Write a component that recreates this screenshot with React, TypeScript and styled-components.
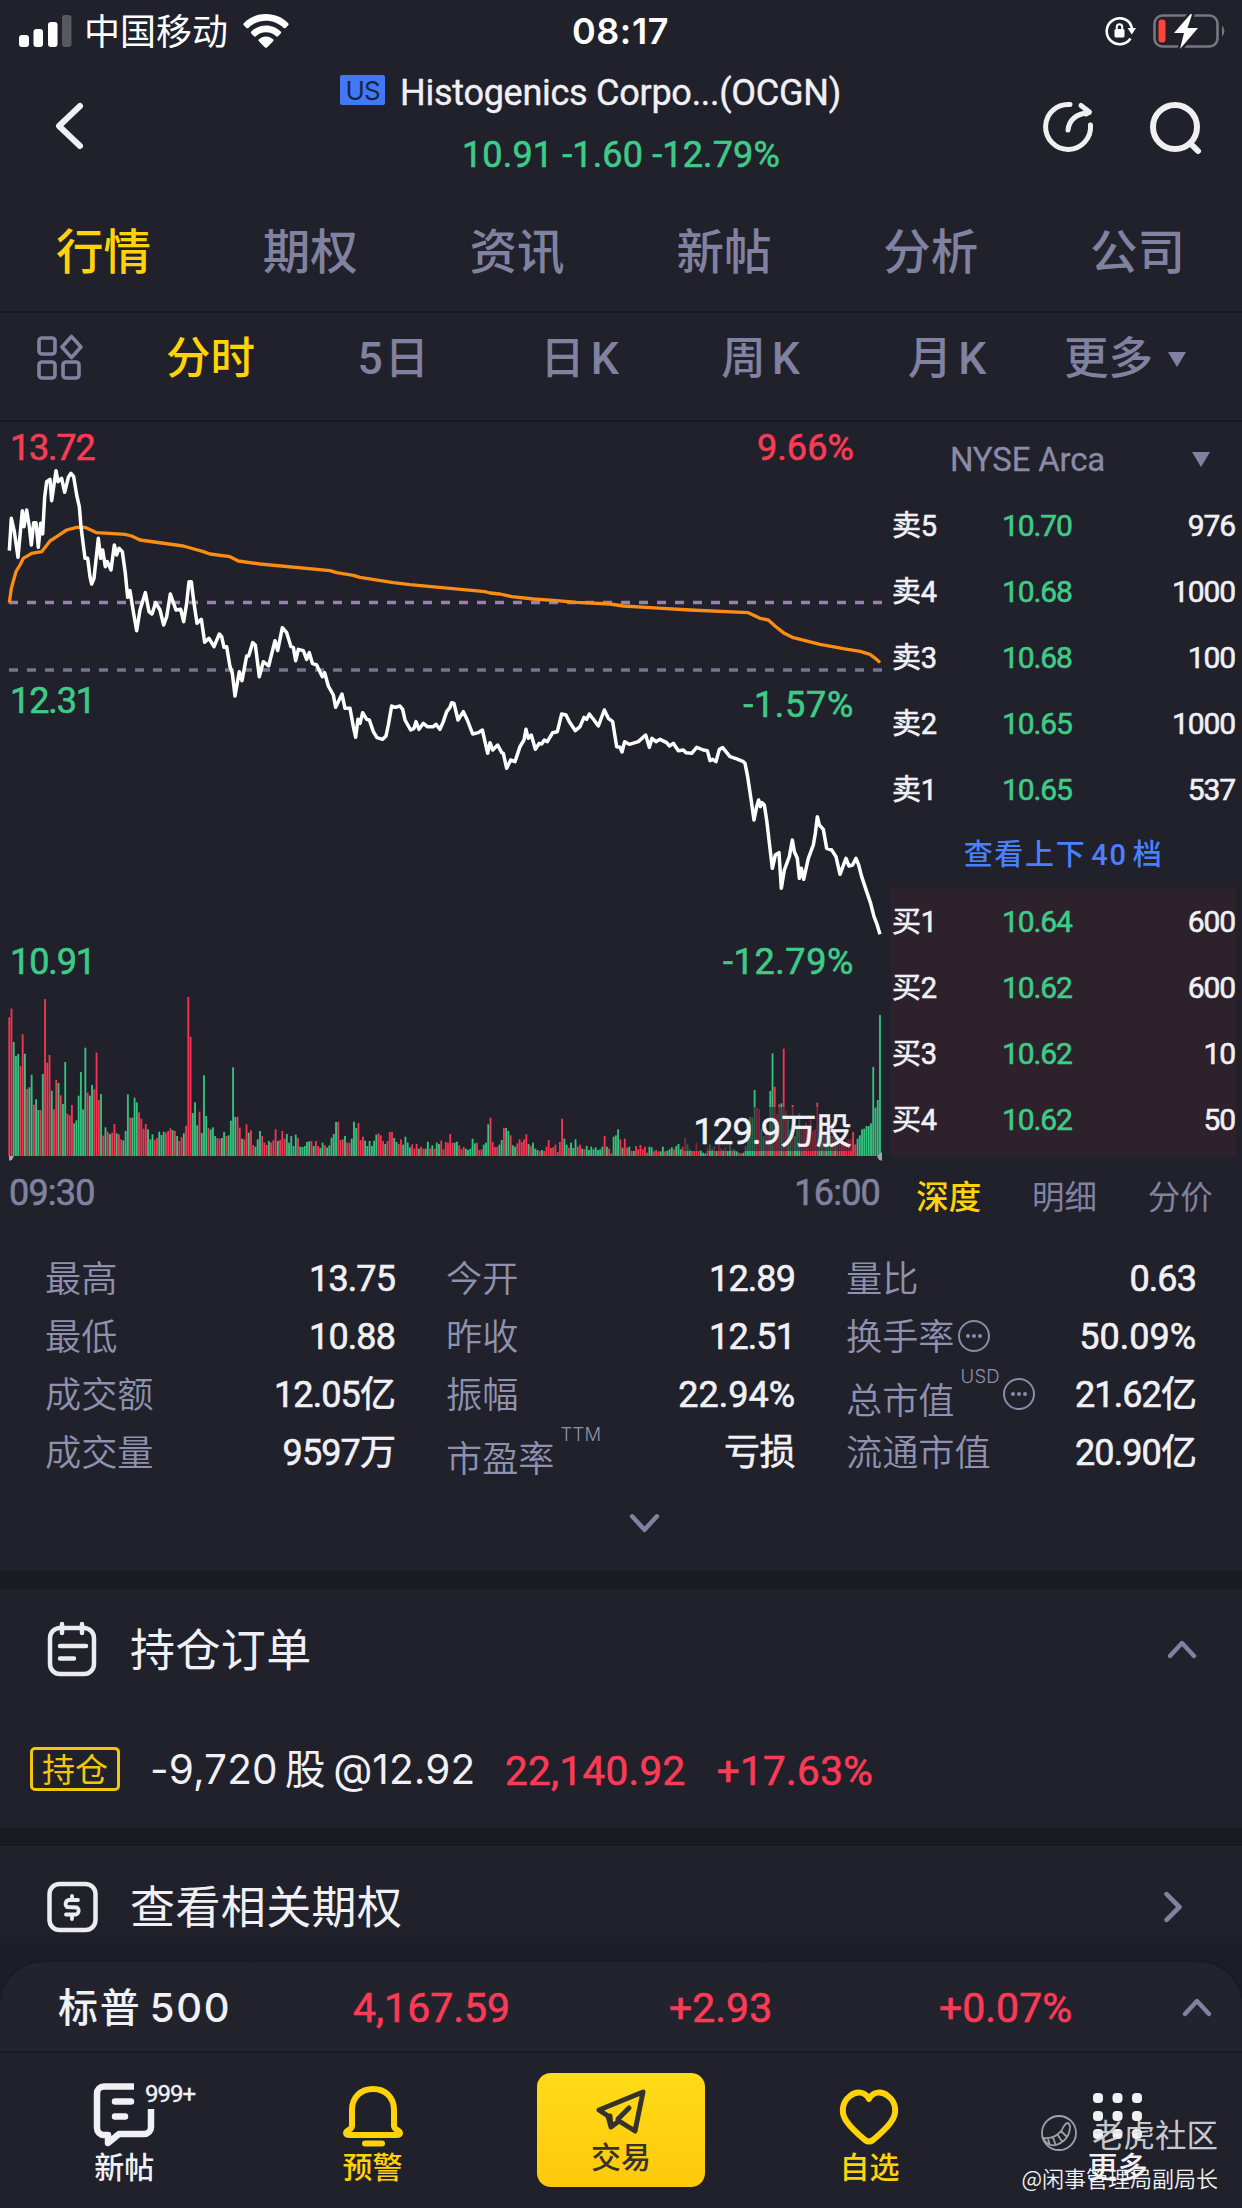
import React from 'react';
import styled, { createGlobalStyle, css } from 'styled-components';

const C = {
  bg: '#20212b',
  dark: '#1a1a23',
  white: '#f0f0f5',
  muted: '#8082a0',
  label: '#8a8ba8',
  yellow: '#ffd20a',
  green: '#3ecb87',
  red: '#fb3b56',
  blue: '#4a80ff',
};

const CJK = "'Noto Sans CJK SC', sans-serif";
const NUM = `Roboto, ${CJK}`;

/* figures sit between regular and medium weight */
const figure = css`
  font-weight: 400;
  -webkit-text-stroke: 0.6px currentColor;
`;

const GlobalStyle = createGlobalStyle`
  * { box-sizing: border-box; }
  body { margin: 0; background: ${C.bg}; }
`;

const Screen = styled.main`
  width: 1242px;
  height: 2208px;
  overflow: hidden;
  display: flex;
  flex-direction: column;
  background: ${C.bg};
  color: ${C.white};
  font-family: ${NUM};
  font-weight: 400;
  position: relative;
`;

/* ---------- status bar ---------- */

const StatusBar = styled.div`
  height: 60px;
  display: grid;
  grid-template-columns: 1fr auto 1fr;
  align-items: center;
  padding: 2px 15px 0 19px;
`;

const StatusSide = styled.div<{ $end?: boolean }>`
  display: flex;
  align-items: center;
  justify-content: ${(p) => (p.$end ? 'flex-end' : 'flex-start')};
  gap: 15px;
`;

const Carrier = styled.span`
  font: 400 36px/54px ${CJK};
  color: #fff;
  margin: -4px 0 0 -3px;
`;

const Clock = styled.span`
  font: 600 36px/54px Inter, sans-serif;
  letter-spacing: 0.6px;
  margin-left: -5px;
  color: #fff;
`;

/* ---------- header ---------- */

const Header = styled.header`
  height: 133px;
  display: grid;
  grid-template-columns: 240px 1fr 240px;
  border-bottom: 2px solid #1e1f28;
`;

const BackArea = styled.div`
  padding: 41px 0 0 53px;
`;

const HeaderActions = styled.div`
  display: flex;
  gap: 55px;
  padding: 41px 0 0 40px;
`;

const TitleBlock = styled.div`
  display: flex;
  flex-direction: column;
  align-items: center;
  padding-top: 1px;
`;

const TitleLine = styled.div`
  display: flex;
  align-items: center;
  height: 62px;
  margin-left: -61px;
  gap: 15px;
  white-space: nowrap;
  font-size: 36px;
  letter-spacing: -0.27px;
`;

const TitleText = styled.span`
  -webkit-text-stroke: 0.4px currentColor;
  padding-top: 1px;
`;

const MarketBadge = styled.span`
  width: 45px;
  height: 30px;
  border-radius: 2px;
  background: #4378f5;
  color: #1b2340;
  font: 400 26px/31px Inter, sans-serif;
  letter-spacing: -1px;
  text-align: center;
  margin-top: -4px;
`;

const PriceLine = styled.div`
  ${figure}
  font-size: 36px;
  line-height: 64px;
  color: ${C.green};
  letter-spacing: 0.15px;
`;

/* ---------- tabs ---------- */

const Tabs = styled.nav`
  height: 120px;
  display: grid;
  grid-template-columns: repeat(6, 1fr);
  border-bottom: 2px solid #181820;
  padding-right: 1px;
`;

const Tab = styled.span<{ $on?: boolean }>`
  font: 500 47.5px/112px ${CJK};
  text-align: center;
  color: ${(p) => (p.$on ? C.yellow : C.muted)};
`;

const SubTabs = styled.nav`
  height: 109px;
  display: grid;
  grid-template-columns: 119px 183px 184px 187px 175px 198px 158px;
  align-items: center;
  border-bottom: 2px solid #181820;
`;

const SubTab = styled.span<{ $on?: boolean; $ls?: number }>`
  display: flex;
  justify-content: center;
  align-items: center;
  gap: 15px;
  font: 500 44.5px/84px Roboto, ${CJK};
  letter-spacing: ${(p) => p.$ls ?? 0}px;
  word-spacing: -5px;
  margin-top: -15px;
  color: ${(p) => (p.$on ? C.yellow : C.muted)};
`;

const LayoutIcon = styled.svg`
  width: 50px;
  height: 50px;
  margin: -18px 0 0 34px;
`;

const Triangle = styled.i<{ $w: number; $h: number }>`
  width: 0;
  height: 0;
  border-left: ${(p) => p.$w / 2}px solid transparent;
  border-right: ${(p) => p.$w / 2}px solid transparent;
  border-top: ${(p) => p.$h}px solid ${C.muted};
`;

/* ---------- chart and order book ---------- */

const Market = styled.section`
  height: 800px;
  display: grid;
  grid-template-columns: 891px 345px;
`;

const ChartPanel = styled.div`
  position: relative;
`;

const ChartSvg = styled.svg`
  display: block;
  width: 885px;
  height: 740px;
`;

const AxisLabel = styled.span<{ $top: number; $side: 'left' | 'right'; $tone: string; $ls?: number }>`
  ${figure}
  position: absolute;
  top: ${(p) => p.$top - 22}px;
  ${(p) => (p.$side === 'left' ? 'left: 10px;' : 'right: 37px;')}
  font-size: 36px;
  line-height: 44px;
  color: ${(p) => p.$tone};
  letter-spacing: ${(p) => p.$ls ?? 0}px;
`;

const VolumeLabel = styled.span`
  ${figure}
  position: absolute;
  right: 39px;
  top: 685px;
  height: 44px;
  padding: 0 1px 0 10px;
  background: rgba(32, 33, 43, 0.6);
  font-size: 36px;
  line-height: 50px;
  letter-spacing: -0.7px;
`;

const TimeAxis = styled.div`
  ${figure}
  display: flex;
  justify-content: space-between;
  padding: 9px 11px 0 9px;
  font-size: 36px;
  line-height: 44px;
  letter-spacing: -0.8px;
  color: ${C.muted};
`;

const Book = styled.div`
  display: flex;
  flex-direction: column;
`;

const Exchange = styled.div`
  height: 70px;
  display: flex;
  align-items: center;
  justify-content: flex-end;
  padding: 5px 26px 0 0;
  gap: 87px;
  font-size: 33px;
  letter-spacing: -0.2px;
  color: ${C.label};
  -webkit-text-stroke: 0.3px currentColor;
`;

const BookSide = styled.div<{ $tint?: boolean }>`
  background: ${(p) => (p.$tint ? '#2d212b' : 'transparent')};
  padding-bottom: ${(p) => (p.$tint ? 5 : 0)}px;
`;

const BookRow = styled.div`
  ${figure}
  height: 66px;
  display: grid;
  grid-template-columns: 110px 1fr 1fr;
  align-items: center;
  padding: 2px 1px 0 1px;
  font-size: 30px;
  line-height: 40px;
  letter-spacing: -1.1px;
`;

const BookName = styled.span`
  font-size: 29px;
  letter-spacing: -0.2px;
`;

const BookPrice = styled.span`
  color: ${C.green};
`;

const BookSize = styled.span`
  text-align: right;
`;

const DepthLink = styled.div`
  height: 66px;
  font: 500 29px/66px Roboto, ${CJK};
  letter-spacing: 1.7px;
  word-spacing: -4px;
  color: ${C.blue};
  text-align: center;
`;

const BookTabs = styled.div`
  display: grid;
  grid-template-columns: repeat(3, 1fr);
  height: 66px;
  margin-right: -2px;
`;

const BookTab = styled.span<{ $on?: boolean }>`
  font: ${(p) => (p.$on ? 500 : 400)} 32.5px/76px ${CJK};
  text-align: center;
  color: ${(p) => (p.$on ? C.yellow : C.muted)};
`;

/* ---------- statistics ---------- */

const Stats = styled.section`
  height: 349px;
  padding: 26px 46px 0 45px;
  display: flex;
  flex-direction: column;
`;

const StatGrid = styled.div`
  display: grid;
  grid-template-columns: 350px 349px 350px;
  grid-auto-rows: 58px;
  column-gap: 51px;
`;

const Stat = styled.div`
  display: flex;
  justify-content: space-between;
  align-items: center;
`;

const StatName = styled.span`
  display: flex;
  align-items: center;
  height: 54px;
  font: 350 36.2px/54px ${CJK};
  color: #8f91ae;
  margin-top: -2px;
`;

const Lowered = styled.span`
  padding-top: 11px;
`;

const Unit = styled.sup`
  font: 300 18.5px/20px Inter, sans-serif;
  align-self: flex-start;
  letter-spacing: 0.2px;
  margin: 1px 0 0 6px;
`;

const StatValue = styled.span<{ $ls?: number }>`
  ${figure}
  font-size: 36px;
  line-height: 44px;
  letter-spacing: ${(p) => p.$ls ?? -0.9}px;
  margin-top: 3px;
`;

const ExpandRow = styled.div`
  display: flex;
  justify-content: center;
  margin: 27px 0 0 47px;
`;

/* ---------- sections ---------- */

const Band = styled.div`
  height: 18px;
  background: ${C.dark};
`;

const Positions = styled.section`
  height: 239px;
`;

const SectionRow = styled.div<{ $pr: number }>`
  height: 122px;
  display: flex;
  align-items: center;
  padding: 0 ${(p) => p.$pr}px 0 44px;
`;

const SectionTitle = styled.h2`
  flex: 1;
  margin: -5px 0 0 30px;
  font: 400 45px/66px ${CJK};
  letter-spacing: 0.4px;
`;

const Holding = styled.div`
  height: 90px;
  margin-top: 13px;
  display: flex;
  align-items: center;
  padding-left: 30px;
  white-space: nowrap;
`;

const HoldingTag = styled.span`
  width: 90px;
  height: 44px;
  border: 3px solid #f0c70a;
  border-radius: 5px;
  color: #f0c70a;
  font: 400 33px/37px ${CJK};
  text-align: center;
`;

const HoldingText = styled.span`
  width: 324px;
  margin-left: 30px;
  padding-top: 2px;
  font: 400 40.5px/60px Inter, ${CJK};
  letter-spacing: 0.1px;
  word-spacing: -4px;
`;

const Gain = styled.span<{ $ml: number }>`
  ${figure}
  margin-left: ${(p) => p.$ml}px;
  font-size: 40.5px;
  line-height: 60px;
  padding-top: 4px;
  letter-spacing: 0.3px;
  color: ${C.red};
`;

const Options = styled.section`
  height: 116px;
  background: linear-gradient(${C.bg} 62%, #1c1d26);
`;

/* ---------- bottom ---------- */

const Bottom = styled.footer`
  background: #1c1d26;
`;

const IndexBar = styled.div`
  height: 91px;
  display: grid;
  grid-template-columns: 341px 316px 270px 1fr 28px;
  align-items: center;
  padding: 2px 32px 0 12px;
  border-radius: 44px 44px 0 0;
  border-bottom: 2px solid #1a1a22;
  background: #22232d;
  box-shadow: 0 -1px 2px #181820;
`;

const IndexName = styled.span`
  font: 500 40px/60px Inter, ${CJK};
  padding-left: 46px;
  letter-spacing: 1.7px;
  word-spacing: -4px;
`;

const IndexValue = styled.span`
  ${figure}
  font-size: 41px;
  padding-top: 1px;
  color: ${C.red};
`;

const NavBar = styled.nav`
  height: 155px;
  display: grid;
  grid-template-columns: repeat(5, 1fr);
  background: ${C.bg};
`;

const NavItem = styled.div<{ $tone?: string }>`
  position: relative;
  display: flex;
  flex-direction: column;
  align-items: center;
  padding-top: 28px;
  color: ${(p) => p.$tone ?? C.white};
`;

const NavIcon = styled.svg`
  width: 66px;
  height: 66px;
`;

const NavLabel = styled.span`
  font: 500 30px/40px ${CJK};
  margin-top: -2px;
`;

const Count = styled.span`
  position: absolute;
  left: 145px;
  top: 29px;
  font-size: 24px;
  line-height: 24px;
  letter-spacing: -1px;
  -webkit-text-stroke: 0.4px currentColor;
`;

const TradeButton = styled.div`
  width: 168px;
  height: 114px;
  margin-top: -8px;
  padding-top: 10px;
  border-radius: 14px;
  background: linear-gradient(#ffdb18, #ffc90a);
  color: #33322d;
  display: flex;
  flex-direction: column;
  align-items: center;

  ${NavLabel} {
    margin-top: -4px;
  }
`;

const Watermark = styled.div`
  position: absolute;
  right: 24px;
  bottom: 15px;
  display: flex;
  flex-direction: column;
  align-items: flex-end;
  white-space: nowrap;
`;

const WatermarkBrand = styled.div`
  display: flex;
  align-items: center;
  gap: 14px;
  font: 400 31.5px/40px ${CJK};
  color: rgba(225, 225, 228, 0.88);
`;

const WatermarkUser = styled.div`
  font: 350 22px/32px ${CJK};
  color: #f2f2f2;
  margin-top: 8px;
`;

/* ---------- data ---------- */

const PRICE =
  '28,422 34,325 43,365 54,442 67,302 72,350 80,300 88,350 94,405 101,338 108,338 115,412 122,340 128,372 134,262 140,215 150,208 155,272 168,182 174,215 185,205 194,247 205,202 213,190 221,200 230,255 238,290 243,350 255,445 263,445 270,500 275,522 282,505 295,385 302,445 308,420 316,470 322,455 333,480 343,405 350,435 357,415 367,425 376,490 383,562 390,542 400,605 410,662 420,600 436,548 447,605 456,612 467,578 480,600 491,645 500,620 511,552 528,600 542,598 551,635 560,580 567,515 574,515 582,580 591,640 604,628 614,697 627,685 642,710 658,672 665,680 672,712 680,710 690,770 697,790 705,858 718,785 726,812 740,738 746,738 758,698 766,705 778,800 790,755 806,768 825,692 833,722 847,653 860,668 873,710 880,712 887,752 895,718 910,722 920,748 928,728 937,760 950,765 967,800 974,788 985,828 1000,855 1007,892 1026,852 1035,895 1050,895 1060,950 1067,982 1074,928 1080,940 1088,908 1100,928 1108,930 1120,965 1131,983 1148,988 1158,978 1165,945 1175,888 1185,892 1200,888 1208,898 1215,930 1232,960 1242,955 1248,935 1257,958 1270,940 1282,950 1300,950 1308,943 1320,958 1330,935 1340,905 1350,892 ' +
  '1355,878 1362,880 1374,930 1390,905 1402,930 1418,972 1435,968 1447,960 1463,1030 1470,998 1478,1020 1493,1005 1505,1028 1510,1030 1520,1075 1532,1050 1545,1055 1560,1010 1572,990 1578,958 1585,985 1594,975 1606,1018 1618,1000 1625,1002 1633,990 1642,995 1658,968 1672,965 1685,912 1698,915 1708,935 1726,962 1740,950 1752,922 1760,928 1768,912 1782,930 1795,948 1813,900 1825,925 1838,935 1850,1010 1860,1012 1866,1026 1874,995 1888,1003 1915,995 1937,975 1948,1012 1956,985 1968,995 1980,988 2000,998 2008,1008 2020,1000 2035,1022 2050,1020 2058,1028 2075,1030 2090,1012 2110,1020 2122,1022 2130,1052 2138,1048 2148,1055 2158,1018 2168,1013 2190,1040 2208,1046 2230,1055 2235,1060 2243,1100 2252,1160 2262,1230 2270,1190 2276,1170 2281,1190 2286,1178 2293,1185 2300,1230 2317,1375 2326,1335 2337,1328 2344,1435 2353,1380 2368,1340 2377,1290 2383,1325 2392,1345 2398,1405 2404,1375 2411,1408 2425,1345 2440,1305 2446,1270 2452,1220 2458,1245 2470,1258 2480,1315 2495,1320 2508,1340 2520,1393 2538,1345 2547,1368 2558,1365 2568,1345 2576,1365 2585,1400 2600,1445 2612,1480 2622,1520 2630,1540 2640,1573';

const AVERAGE =
  '28,578 34,535 48,485 60,465 70,445 95,430 125,425 150,393 170,380 200,360 230,352 255,352 290,368 375,373 395,378 420,390 550,408 610,425 630,432 690,440 715,453 780,462 990,482 1010,488 1060,496 1080,502 1180,518 1230,524 1350,535 1455,545 1470,549 1500,552 1535,560 1600,567 1670,572 1730,577 1830,582 1870,588 1950,593 2070,600 2245,608 2280,625 2305,630 2325,648 2353,670 2380,683 2460,703 2530,716 2580,724 2610,733 2630,748 2640,758';

const VOLUME = (
  'r416 r442 g342 g300 g306 r270 r365 g307 r201 g206 g244 r154 g170 g138 r138 g246 r471 r280 r303 g196 r140 r228 g219 r182 g156 g282 r127 r122 r153 g98 g107 g181 g252 g140 g325 r190 g181 g213 r200 r310 r168 g186 r61 g86 r72 g66 r70 r96 g68 r65 r50 g47 g75 g185 r115 g115 g175 g161 r131 r112 r82 r96 g80 g50 g65 r48 r54 g73 g63 g73 r70 r75 r83 g78 r75 g60 r45 r57 g68 r91 r477 r358 g129 g161 g92 r133 g69 g242 g120 r84 g80 g86 g60 r54 r52 g54 g72 r60 g62 g106 g266 g117 r118 r85 g52 r50 r95 g70 r77 r33 g28 g50 g75 r60 r40 r33 g45 r40 r47 r80 g45 r48 r75 r52 g66 g40 g60 g30 g64 r54 g28 g27 g30 g42 g44 r45 g30 r45 r30 g24 g40 r32 g25 g32 g55 g66 g102 r103 r48 r50 g60 r40 r40 g52 g103 g84 r99 r48 r58 g46 g30 g45 g30 g46 g64 r68 r62 r45 g36 r45 r72 r72 g54 g42 r36 r50 g34 g58 g40 g26 r35 r22 r36 g22 r28 r22 g22 g43 r22 g32 r22 g40 g36 r46 r20 r42 r40 r66 ' +
  'r40 g40 g43 r32 r20 r27 g22 g18 g22 g52 g38 r40 r18 r20 g34 g40 g95 r115 r42 r27 r27 g34 g48 r85 g84 g75 r62 g32 g28 r38 r50 r42 r50 r65 g36 r30 g40 g22 g18 r15 g18 r15 r28 r48 r24 r26 r34 r12 r42 r112 g52 g34 r25 g40 g24 g50 r28 r34 g22 r20 g30 g18 g28 g20 g26 g18 g20 g28 r60 g28 r22 r8 g58 g62 g80 r50 g25 r52 r25 g28 r15 g15 r30 r20 r33 r20 r28 r10 g28 g26 r14 r18 r14 g14 g28 r14 g16 g20 g26 r20 g30 g36 g20 r28 r55 g35 g20 r15 r15 r40 r15 g18 g10 g8 r25 g35 g22 r30 g15 r35 r22 g18 r25 g15 g35 r20 g20 g14 r10 r8 g10 g30 g75 g118 g115 g198 r145 r140 g80 g60 r75 r70 g195 g308 r208 r125 r155 g158 r322 r135 g110 g80 r153 g60 g85 g128 r90 r80 r100 r90 r110 r75 r80 r160 g95 g60 r70 g65 g55 g60 r60 g55 r60 r50 r40 r35 r45 r50 r50 r72 r35 g52 g62 g80 g82 g90 g90 g98 g267 g145 g168 g423'
).split(' ');

const SELL = [
  ['卖5', '10.70', '976'],
  ['卖4', '10.68', '1000'],
  ['卖3', '10.68', '100'],
  ['卖2', '10.65', '1000'],
  ['卖1', '10.65', '537'],
];

const BUY = [
  ['买1', '10.64', '600'],
  ['买2', '10.62', '600'],
  ['买3', '10.62', '10'],
  ['买4', '10.62', '50'],
];

type StatItem = { name: string; value: string; unit?: string; more?: boolean; ls?: number };

const STATS: StatItem[] = [
  { name: '最高', value: '13.75' },
  { name: '今开', value: '12.89' },
  { name: '量比', value: '0.63' },
  { name: '最低', value: '10.88' },
  { name: '昨收', value: '12.51' },
  { name: '换手率', value: '50.09%', more: true, ls: 0 },
  { name: '成交额', value: '12.05亿' },
  { name: '振幅', value: '22.94%', ls: 0 },
  { name: '总市值', value: '21.62亿', unit: 'USD', more: true },
  { name: '成交量', value: '9597万' },
  { name: '市盈率', value: '亏损', unit: 'TTM', ls: -0.5 },
  { name: '流通市值', value: '20.90亿' },
];

/* ---------- small drawings ---------- */

const Chevron = ({ dir, size = 28, color = C.muted }: { dir: 'up' | 'down' | 'right'; size?: number; color?: string }) => {
  const d = { up: 'M3 21 L15 8 L27 21', down: 'M3 9 L15 22 L27 9', right: 'M9 3 L21 15 L9 27' }[dir];
  return (
    <svg width={size} height={size} viewBox="0 0 30 30" fill="none" stroke={color} strokeWidth="4.400" strokeLinecap="round" strokeLinejoin="round">
      <path d={d} />
    </svg>
  );
};

const MoreIcon = styled.svg`
  width: 34px;
  height: 34px;
  margin: 4px 0 0 2px;
`;

const More = () => (
  <MoreIcon viewBox="0 0 34 34">
    <circle cx="17" cy="17" r="15" fill="none" stroke="#8a8ba8" strokeWidth="2" />
    <g fill="#8a8ba8">
      <circle cx="11" cy="17" r="2" />
      <circle cx="17" cy="17" r="2" />
      <circle cx="23" cy="17" r="2" />
    </g>
  </MoreIcon>
);

const Signal = () => (
  <svg width="53" height="34" viewBox="0 0 53 34" fill="#fff">
    <rect x="0" y="21" width="10" height="12" rx="3" />
    <rect x="14.5" y="15" width="9.5" height="18" rx="3" />
    <rect x="29" y="8" width="9.5" height="25" rx="3" />
    <rect x="43" y="1" width="9.5" height="32" rx="3" opacity=".25" />
  </svg>
);

const Wifi = () => (
  <svg width="46" height="34" viewBox="0 0 46 34" fill="#fff">
    <path d="M23 0C14 0 6 3.600 .8 9.200c-.6.6-.6 1.400 0 2l2.600 2.700c.6.6 1.400.6 2 0C10 9.400 16.200 6.700 23 6.700s13 2.700 17.600 7.200c.6.6 1.400.6 2 0l2.600-2.700c.6-.6.6-1.400 0-2C40 3.600 32 0 23 0z" />
    <path d="M23 11.400c-5.700 0-10.900 2.300-14.700 6-.6.6-.6 1.400 0 2l2.700 2.800c.6.6 1.300.6 1.900 0 2.600-2.500 6.200-4 10.100-4s7.500 1.500 10.100 4c.6.6 1.300.6 1.900 0l2.700-2.800c.6-.6.6-1.400 0-2-3.800-3.700-9-6-14.700-6z" />
    <path d="M23 22.500c-2.800 0-5.300 1.100-7.100 2.800-.6.6-.6 1.300 0 1.900l6.100 6.200c.6.6 1.400.6 2 0l6.100-6.200c.6-.6.6-1.300 0-1.900-1.800-1.700-4.300-2.800-7.100-2.800z" />
  </svg>
);

const RotationLock = () => (
  <svg width="34" height="32" viewBox="0 0 34 32" fill="none" stroke="#fff" strokeWidth="2.600">
    <path d="M26.500 9 A13 13 0 1 0 26.500 23.500" />
    <path d="M23.500 13 h8.500 l-4.200 6.500 z" fill="#fff" stroke="none" />
    <path d="M26 8.500 q2 3 2 6" />
    <rect x="10.500" y="14" width="10" height="8.500" rx="1.500" fill="#fff" stroke="none" />
    <path d="M12.800 14.500 v-2.500 a2.700 2.700 0 0 1 5.400 0 v2.500" strokeWidth="2" />
  </svg>
);

const Battery = () => (
  <svg width="74" height="38" viewBox="0 0 74 38">
    <rect x="1.500" y="3.500" width="63" height="31" rx="8" fill="none" stroke="#77777f" strokeWidth="2.600" />
    <path d="M69 13.500 q5 5.500 0 11 z" fill="#77777f" />
    <rect x="5.500" y="7.500" width="7" height="23" rx="3" fill="#ff453a" />
    <path d="M37.500 2 L21 21 h10 L27 37 L45 16 h-10.500 L39 2.500 z" fill="#fff" stroke={C.bg} strokeWidth="5" paintOrder="stroke" strokeLinejoin="round" />
  </svg>
);

const VolumeBars = () => (
  <g>
    {VOLUME.map((v, i) => {
      const h = Number(v.slice(1));
      return <rect key={i} x={25 + i * 6.715} y={2238 - h} width="5.500" height={h} fill={v[0] === 'r' ? '#f63453' : '#35c47f'} />;
    })}
  </g>
);

const Chart = () => (
  <ChartSvg viewBox="0 36 2655 2220">
    <path d="M27 577.500 H2647" stroke="#9b80ae" strokeWidth="10" strokeDasharray="27 27" />
    <path d="M27 780 H2647" stroke="#77748f" strokeWidth="10" strokeDasharray="27 27" />
    <VolumeBars />
    <polyline points={AVERAGE} fill="none" stroke="#fb8c14" strokeWidth="10" strokeLinejoin="round" />
    <polyline points={PRICE} fill="none" stroke="#fff" strokeWidth="10.500" strokeLinejoin="round" />
    <path d="M27 2238 h14 a14 14 0 0 1 -14 14 z" fill="#a5a5ad" />
    <path d="M2646 2226 v26 a14 14 0 0 1 -14 -14 z" fill="#a5a5ad" />
  </ChartSvg>
);

const BookRows = ({ rows }: { rows: string[][] }) => (
  <>
    {rows.map(([name, price, size]) => (
      <BookRow key={name}>
        <BookName>{name}</BookName>
        <BookPrice>{price}</BookPrice>
        <BookSize>{size}</BookSize>
      </BookRow>
    ))}
  </>
);

export default function App() {
  return (
    <>
      <GlobalStyle />
      <Screen>
        <StatusBar>
          <StatusSide>
            <Signal />
            <Carrier>中国移动</Carrier>
            <Wifi />
          </StatusSide>
          <Clock>08:17</Clock>
          <StatusSide $end>
            <RotationLock />
            <Battery />
          </StatusSide>
        </StatusBar>

        <Header>
          <BackArea>
            <svg width="34" height="50" viewBox="0 0 34 50" fill="none" stroke="#f0f0f5" strokeWidth="6" strokeLinecap="round" strokeLinejoin="round">
              <path d="M27 5 L6 25 L27 45" />
            </svg>
          </BackArea>
          <TitleBlock>
            <TitleLine>
              <MarketBadge>US</MarketBadge>
              <TitleText>Histogenics Corpo...(OCGN)</TitleText>
            </TitleLine>
            <PriceLine>10.91 -1.60 -12.79%</PriceLine>
          </TitleBlock>
          <HeaderActions>
            <svg width="52" height="52" viewBox="0 0 52 52" fill="none" stroke="#f0f0f0" strokeWidth="5" strokeLinecap="round" strokeLinejoin="round">
              <path d="M28 3.500 A22.500 22.500 0 1 0 48.500 24" />
              <path d="M26 29 C27 20 33 13 47 11.500 M39 4.500 L47.500 11 L44 13" />
            </svg>
            <svg width="56" height="56" viewBox="0 0 56 56" fill="none" stroke="#f0f0f0" strokeWidth="6" strokeLinecap="round">
              <circle cx="26" cy="26" r="22" />
              <path d="M42 43 L49 50" />
            </svg>
          </HeaderActions>
        </Header>

        <Tabs>
          <Tab $on>行情</Tab>
          <Tab>期权</Tab>
          <Tab>资讯</Tab>
          <Tab>新帖</Tab>
          <Tab>分析</Tab>
          <Tab>公司</Tab>
        </Tabs>

        <SubTabs>
          <LayoutIcon viewBox="0 0 50 50" fill="none" stroke={C.muted} strokeWidth="3.600" strokeLinejoin="round">
            <rect x="5" y="5" width="16" height="16" rx="3" />
            <path d="M37.500 3.500 L47 14 L37.500 24.500 L28 14 Z" />
            <rect x="5" y="29" width="16" height="16" rx="3" />
            <rect x="29" y="29" width="16" height="16" rx="3" />
          </LayoutIcon>
          <SubTab $on>分时</SubTab>
          <SubTab $ls={1.5}>5日</SubTab>
          <SubTab>日 K</SubTab>
          <SubTab>周 K</SubTab>
          <SubTab>月 K</SubTab>
          <SubTab>
            更多
            <Triangle $w={18} $h={15} />
          </SubTab>
        </SubTabs>

        <Market>
          <ChartPanel>
            <Chart />
            <AxisLabel $top={26} $side="left" $tone={C.red} $ls={-1.2}>13.72</AxisLabel>
            <AxisLabel $top={26} $side="right" $tone={C.red} $ls={0.1}>9.66%</AxisLabel>
            <AxisLabel $top={279} $side="left" $tone={C.green} $ls={-1.1}>12.31</AxisLabel>
            <AxisLabel $top={283} $side="right" $tone={C.green} $ls={0.7}>-1.57%</AxisLabel>
            <AxisLabel $top={540} $side="left" $tone={C.green} $ls={-1.1}>10.91</AxisLabel>
            <AxisLabel $top={540} $side="right" $tone={C.green} $ls={0.6}>-12.79%</AxisLabel>
            <VolumeLabel>129.9万股</VolumeLabel>
            <TimeAxis>
              <span>09:30</span>
              <span>16:00</span>
            </TimeAxis>
          </ChartPanel>
          <Book>
            <Exchange>
              <span>NYSE Arca</span>
              <Triangle $w={19} $h={15} />
            </Exchange>
            <BookSide>
              <BookRows rows={SELL} />
            </BookSide>
            <DepthLink>查看上下 40 档</DepthLink>
            <BookSide $tint>
              <BookRows rows={BUY} />
            </BookSide>
            <BookTabs>
              <BookTab $on>深度</BookTab>
              <BookTab>明细</BookTab>
              <BookTab>分价</BookTab>
            </BookTabs>
          </Book>
        </Market>

        <Stats>
          <StatGrid>
            {STATS.map((s) => (
              <Stat key={s.name}>
                <StatName>
                  {s.unit ? <Lowered>{s.name}</Lowered> : s.name}
                  {s.unit && <Unit>{s.unit}</Unit>}
                  {s.more && <More />}
                </StatName>
                <StatValue $ls={s.ls}>{s.value}</StatValue>
              </Stat>
            ))}
          </StatGrid>
          <ExpandRow>
            <Chevron dir="down" size={31} />
          </ExpandRow>
        </Stats>

        <Band />

        <Positions>
          <SectionRow $pr={45}>
            <svg width="56" height="60" viewBox="0 0 56 60" fill="none" stroke="#ececf0" strokeWidth="4.500" strokeLinecap="round">
              <rect x="6" y="8" width="44" height="46" rx="10" />
              <path d="M18 4 v9 M38 4 v9 M16 26 h26 M16 38.500 h14" />
            </svg>
            <SectionTitle>持仓订单</SectionTitle>
            <Chevron dir="up" size={30} />
          </SectionRow>
          <Holding>
            <HoldingTag>持仓</HoldingTag>
            <HoldingText>-9,720 股 @12.92</HoldingText>
            <Gain $ml={31}>22,140.92</Gain>
            <Gain $ml={31}>+17.63%</Gain>
          </Holding>
        </Positions>

        <Band />

        <Options>
          <SectionRow $pr={53}>
            <svg width="56" height="56" viewBox="0 0 56 56" fill="none" stroke="#ececf0" strokeWidth="4.500" strokeLinecap="round" strokeLinejoin="round">
              <rect x="5.500" y="5" width="46" height="46" rx="10" />
              <path d="M34 21 H25 a4 4 0 0 0 -2 7 L33 28.500 a4 4 0 0 1 -1 7 H22 M28 17 v4 M28 36 v4" strokeWidth="3.800" />
            </svg>
            <SectionTitle>查看相关期权</SectionTitle>
            <Chevron dir="right" size={32} />
          </SectionRow>
        </Options>

        <Bottom>
          <IndexBar>
            <IndexName>标普 500</IndexName>
            <IndexValue>4,167.59</IndexValue>
            <IndexValue>+2.93</IndexValue>
            <IndexValue>+0.07%</IndexValue>
            <Chevron dir="up" size={30} />
          </IndexBar>
          <NavBar>
            <NavItem>
              <NavIcon viewBox="0 0 66 66" fill="none" stroke="currentColor" strokeWidth="6.500" strokeLinejoin="round">
                <path d="M43 5.500 H13 a7 7 0 0 0 -7 7 V47 a7 7 0 0 0 7 7 h4 v8 l11 -9 H53 a7 7 0 0 0 7 -7 V28" />
                <path d="M24 20.500 H40 M24 35.500 H34" strokeLinecap="round" />
              </NavIcon>
              <Count>999+</Count>
              <NavLabel>新帖</NavLabel>
            </NavItem>
            <NavItem $tone={C.yellow}>
              <NavIcon viewBox="0 0 66 66" fill="none" stroke="currentColor" strokeWidth="6" strokeLinejoin="round" strokeLinecap="round">
                <path d="M12 45 V29 C12 16 21 8 33 8 S54 16 54 29 V45 C54 49 60 49 60 52 Q60 54 56 54 H10 Q6 54 6 52 C6 49 12 49 12 45 Z" />
                <path d="M25 62.500 H42" />
              </NavIcon>
              <NavLabel>预警</NavLabel>
            </NavItem>
            <NavItem>
              <TradeButton>
                <svg width="56" height="56" viewBox="0 0 56 56" fill="none" stroke="currentColor" strokeWidth="5" strokeLinejoin="round" strokeLinecap="round">
                  <path d="M50 9 L6 27 L15 33 L18 44 L26 38 L42 48 Z M18 44 L17 33 M25 36 L36 25" />
                </svg>
                <NavLabel>交易</NavLabel>
              </TradeButton>
            </NavItem>
            <NavItem $tone={C.yellow}>
              <NavIcon viewBox="0 0 66 66" fill="none" stroke="currentColor" strokeWidth="6" strokeLinejoin="round">
                <path d="M33 18 C29 10 20 10 14 15 C5 22 5 33 11 41 C16 48 23 54 29 59 Q33 62 37 59 C43 54 50 48 55 41 C61 33 61 22 52 15 C46 10 37 10 33 18 Z" />
              </NavIcon>
              <NavLabel>自选</NavLabel>
            </NavItem>
            <NavItem>
              <NavIcon viewBox="0 0 66 66" fill="currentColor">
                {[12, 30, 48].map((y) => [8, 27.5, 47].map((x) => <rect key={`${x}-${y}`} x={x} y={y} width="10" height="10" rx="4" />))}
              </NavIcon>
              <NavLabel>更多</NavLabel>
            </NavItem>
          </NavBar>
        </Bottom>

        <Watermark>
          <WatermarkBrand>
            <svg width="38" height="38" viewBox="0 0 38 38" fill="none" stroke="#a0a0a8" strokeWidth="1.800">
              <circle cx="19" cy="19" r="17" />
              <path d="M24 12 Q28 6 30 12 Q30 26 16 31 Q8 33 3 24 Q12 25 18 20 Q22 17 24 12 Z M8 25 l2 6 M13 23.500 l2.500 7 M17.500 20.500 l4.500 7 M21 17 l5.500 5.500" />
            </svg>
            老虎社区
          </WatermarkBrand>
          <WatermarkUser>@闲事管理局副局长</WatermarkUser>
        </Watermark>
      </Screen>
    </>
  );
}
